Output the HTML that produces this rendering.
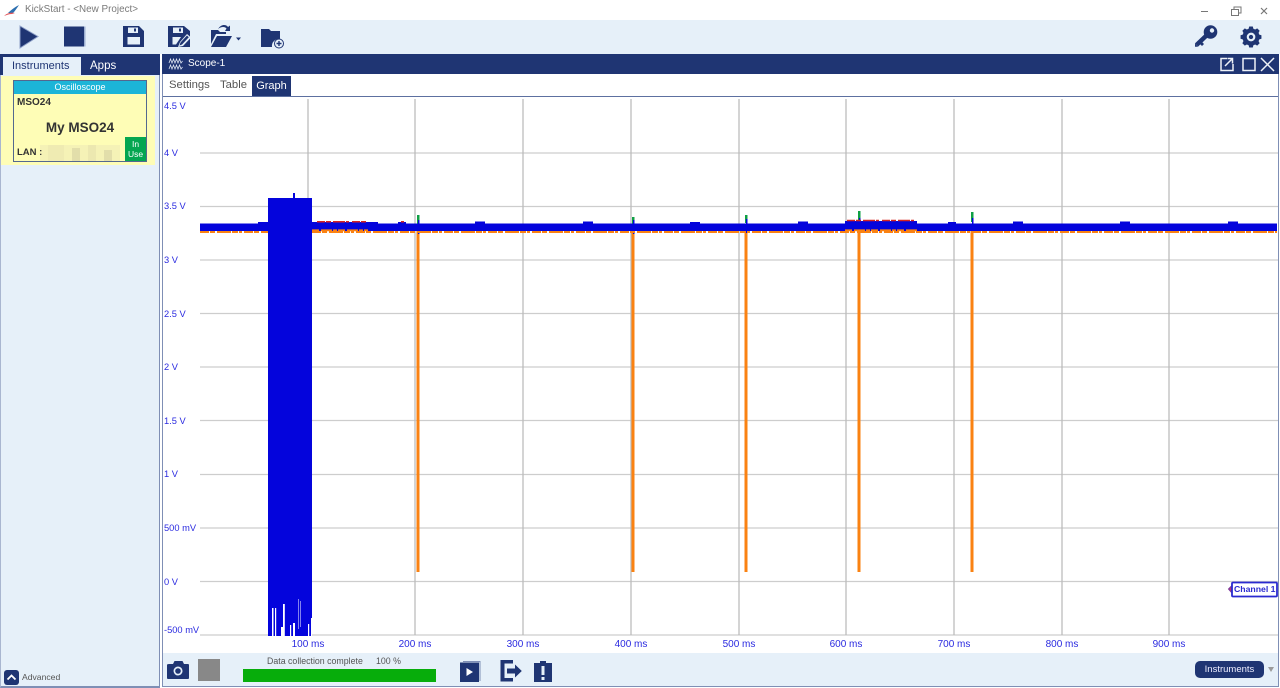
<!DOCTYPE html>
<html><head><meta charset="utf-8"><style>
html,body{margin:0;padding:0;background:#fff;width:1280px;height:688px;overflow:hidden}
body{font-family:"Liberation Sans",sans-serif;position:relative}
.a{position:absolute}
.t{position:absolute;white-space:nowrap;line-height:1}
.y{position:absolute;left:164px;color:#2a2ae0;font-size:9.3px;line-height:1;white-space:nowrap}
.x{position:absolute;top:640px;width:60px;text-align:center;color:#2a2ae0;font-size:10px;line-height:1}
</style></head><body>
<!-- title -->
<svg class="a" style="left:4px;top:3px" width="16" height="14" viewBox="0 0 16 14"><path d="M4 10 C7 7 11 4 15 2 C13 5 11 8 9 10Z" fill="#2c6fb0"/><path d="M0 13 C3 10 7 9 11 10 L8 11 C5 11 3 12 0 13Z" fill="#e0555a"/></svg>
<div class="t" style="left:25px;top:5px;font-size:9.900px;color:#7a7a7a">KickStart - &lt;New Project&gt;</div>
<svg class="a" style="left:1198px;top:2px" width="82" height="18"><path d="M3 9.500H10" stroke="#777" stroke-width="1"/><path d="M33.500 7.500h7v6h-7z M36 7V5h7v6h-2" fill="none" stroke="#777"/><path d="M63 6l6 6M69 6l-6 6" stroke="#777" stroke-width="1.200"/></svg>
<!-- toolbar -->
<div class="a" style="left:0;top:20px;width:1280px;height:34px;background:#e6f0f9"></div>
<svg class="a" style="left:0;top:20px" width="300" height="34" viewBox="0 0 300 34" fill="#1f3573">
<path d="M20 6L38 16.500L20 28Z" stroke="#8ea0c8" stroke-width="1"/>
<rect x="64" y="6.500" width="21" height="20"/><rect x="84" y="6.500" width="1.500" height="20" fill="#9db0d2"/>
<path fill-rule="evenodd" d="M123 6H139L144 11V27H123Z M128 7.500V13H138V7.500Z M127.500 17V24.500H140V17Z"/>
<rect x="134" y="8.500" width="2" height="3"/>
<path fill-rule="evenodd" d="M168 6H184L190 11V27H168Z M173 7.500V13H183V7.500Z M172.500 17V24.500H176L181 17Z"/><rect x="179" y="8.500" width="2" height="3"/>
<path d="M178 27L180 22L187 14L191 17.500L183 26Z" fill="#e6f0f9"/><path d="M179.500 25.500L180.500 22.500L187 15.500L188.800 17.200L182 24.500Z"/>
<path d="M211 14V10H218L220 12H226V14H216L211 24Z M211 27L217 16H232L226 27Z"/><path d="M218 9C221 4 226 4 228 7L230 5.500L230 11H225L226.500 8.500C225 6.500 221 6.500 218 9Z" fill="#1f3573"/>
<path d="M236 17.500h5l-2.500 3z"/>
<path d="M261 9H269L271 11H280V19A7 7 0 0 0 272 27H261Z"/><circle cx="279" cy="23.500" r="4.500" stroke="#1f3573" stroke-width="1" fill="#e6f0f9"/><path d="M276.500 23.500H281.500M279 21V26" stroke="#1f3573" stroke-width="1.400"/>
</svg>
<svg class="a" style="left:1190px;top:22px" width="80" height="28" viewBox="0 0 80 28" fill="#1f3573">
<circle cx="20.500" cy="10" r="6.800"/>
<path d="M17 13L6.500 23" stroke="#1f3573" stroke-width="4.500" fill="none"/>
<path d="M5 21.500L8 24.800H5V24.800Z"/><path d="M9 21L12 24L14 22L11 19Z"/>
<circle cx="22" cy="8.500" r="2.200" fill="#e6f0f9"/>
<g transform="translate(61,15) scale(.72) translate(-61,-17.500)">
<path fill-rule="evenodd" d="M58.500 3h5l.8 3 2.500 1 2.800-1.500 3.400 3.400-1.500 2.800 1 2.500 3 .8v5l-3 .8-1 2.500 1.500 2.800-3.400 3.400-2.800-1.500-2.500 1-.8 3h-5l-.8-3-2.500-1-2.800 1.500-3.400-3.400 1.500-2.800-1-2.500-3-.8v-5l3-.8 1-2.500-1.500-2.800 3.400-3.400 2.800 1.500 2.500-1Z M61 11.500a6 6 0 1 0 .1 12 6 6 0 0 0-.1-12Z"/><circle cx="61" cy="17.500" r="3"/>
</g>
</svg>
<!-- left panel -->
<div class="a" style="left:0;top:54px;width:160px;height:634px;background:#e6f0f9;box-sizing:border-box;border-right:1px solid #7f8fb5;border-left:1px solid #a9b6d0;border-bottom:2px solid #7f8fb5"></div>
<div class="a" style="left:0;top:54px;width:160px;height:21px;background:#1f3573"></div>
<div class="a" style="left:3px;top:57px;width:78px;height:19px;background:#e6f0f9"></div>
<div class="t" style="left:12px;top:61px;font-size:11px;color:#1f3573">Instruments</div>
<div class="t" style="left:90px;top:61px;font-size:11.500px;color:#fff">Apps</div>
<div class="a" style="left:1px;top:76px;width:154px;height:89px;background:#fefdb6"></div>
<div class="a" style="left:13px;top:80px;width:134px;height:82px;box-sizing:border-box;border:1px solid #54688f;background:#fefdb6"></div>
<div class="a" style="left:14px;top:81px;width:132px;height:13px;background:#1cb5d8;color:#fff;font-size:9px;line-height:13px;text-align:center">Oscilloscope</div>
<div class="t" style="left:17px;top:98px;font-size:10px;font-weight:bold;color:#333">MSO24</div>
<div class="t" style="left:14px;top:121px;width:132px;text-align:center;font-size:13.500px;font-weight:bold;color:#333">My MSO24</div>
<svg class="a" style="left:40px;top:145px" width="80" height="16"><rect width="80" height="16" fill="#f5f2b6"/><rect x="8" y="0" width="16" height="16" fill="#efebb2"/><rect x="32" y="3" width="8" height="13" fill="#e2deaa"/><rect x="48" y="0" width="8" height="16" fill="#ece8b0"/><rect x="64" y="5" width="8" height="11" fill="#e2deaa"/></svg>
<div class="t" style="left:17px;top:148px;font-size:9.500px;font-weight:bold;color:#333">LAN :</div>
<div class="a" style="left:125px;top:137px;width:21px;height:24px;background:#05a650;color:#fff;font-size:8.500px;line-height:10px;text-align:center;padding-top:2px;box-sizing:border-box">In<br>Use</div>
<div class="a" style="left:4px;top:670px;width:15px;height:15px;background:#1f3573;border-radius:3px"></div>
<svg class="a" style="left:4px;top:670px" width="15" height="15"><path d="M3.500 9.500L7.500 5.500L11.500 9.500" fill="none" stroke="#fff" stroke-width="1.800"/></svg>
<div class="t" style="left:22px;top:673px;font-size:8.600px;color:#555">Advanced</div>
<!-- right panel -->
<div class="a" style="left:162px;top:54px;width:1117px;height:633px;box-sizing:border-box;border:1px solid #7f8fb5;border-top:0;background:#fff"></div>
<div class="a" style="left:162px;top:54px;width:1117px;height:20px;background:#1f3573"></div>
<svg class="a" style="left:168px;top:57px" width="16" height="13" fill="none" stroke="#dfe6f2" stroke-width=".8"><path d="M1 6L2.500 2L4 6L5.500 2L7 6L8.500 2L10 6L11.500 2L13 6L14.500 4"/><path d="M1 12L2.500 8L4 12L5.500 8L7 12L8.500 8L10 12L11.500 8L13 12L14.500 10"/></svg>
<div class="t" style="left:188px;top:59px;font-size:10px;color:#fff">Scope-1</div>
<svg class="a" style="left:1218px;top:56px" width="60" height="17" fill="none" stroke="#eef2f8" stroke-width="1.500"><path d="M9 2.500H3V14.500H15V8"/><path d="M7 10L14 3M9.500 2.500H14.500V7.500"/><rect x="25" y="2.500" width="12" height="12"/><path d="M43 2L56 15M56 2L43 15"/></svg>
<div class="t" style="left:169px;top:80px;font-size:11.300px;color:#555">Settings</div>
<div class="t" style="left:220px;top:80px;font-size:11.300px;color:#555">Table</div>
<div class="a" style="left:252px;top:76px;width:39px;height:20px;background:#1f3573;color:#fff;font-size:11px;line-height:20px;text-align:center">Graph</div>
<div class="a" style="left:163px;top:96px;width:1115px;height:1px;background:#5d70a0"></div>
<!-- graph -->
<svg class="a" style="left:0;top:0" width="1280" height="688">
<g stroke="#cdcdcd" stroke-width="1.200" fill="none">
<path d="M200 153H1278M200 206.500H1278M200 260H1278M200 313.500H1278M200 367H1278M200 420.500H1278M200 474.500H1278M200 528H1278M200 581.500H1278M200 635H1278"/>
</g>
<g stroke="#bcbcbc" stroke-width="1.300" fill="none">
<path d="M308 99V635M415 99V635M523 99V635M631 99V635M739 99V635M846 99V635M954 99V635M1062 99V635M1169 99V635"/>
</g>
<!-- spikes -->
<g fill="#fa8212">
<rect x="416.500" y="230" width="3" height="342"/>
<rect x="631.500" y="230" width="3" height="342"/>
<rect x="744.500" y="230" width="3" height="342"/>
<rect x="857.500" y="230" width="3" height="342"/>
<rect x="970.500" y="230" width="3" height="342"/>
</g>
<g fill="#0f9f45">
<rect x="417" y="215" width="2.500" height="9"/>
<rect x="632" y="217" width="2.500" height="7"/>
<rect x="745" y="215" width="2.500" height="8"/>
<rect x="858" y="211" width="2.500" height="11"/>
<rect x="971" y="212" width="2.500" height="10"/>
</g>
<!-- blue band -->
<g fill="#0404dc">
<rect x="200" y="223.500" width="1077" height="7.500"/>
<rect x="258" y="222" width="12" height="8"/>
<rect x="312" y="222" width="66" height="8"/>
<rect x="398" y="222" width="8" height="3"/>
<rect x="475" y="221.500" width="10" height="4"/>
<rect x="583" y="221.500" width="10" height="4"/>
<rect x="690" y="222" width="10" height="4"/>
<rect x="798" y="221.500" width="10" height="4"/>
<rect x="845" y="221" width="72" height="8"/>
<rect x="905" y="221.500" width="10" height="4"/>
<rect x="948" y="222" width="8" height="4"/>
<rect x="1013" y="221.500" width="10" height="4"/>
<rect x="1120" y="221.500" width="10" height="4"/>
<rect x="1228" y="221.500" width="10" height="4"/>
<rect x="418" y="220" width="1.500" height="14"/>
<rect x="633" y="220" width="1.500" height="14"/>
<rect x="746" y="219" width="1.500" height="14"/>
<rect x="859" y="218" width="1.500" height="14"/>
<rect x="972" y="218" width="1.500" height="14"/>
<!-- burst -->
<rect x="268" y="198" width="44" height="438"/>
<rect x="293" y="193" width="2" height="6"/>
</g>
<!-- orange jagged edge, over the band's lower edge -->
<path d="M200 232H268M312 232H1277" stroke="#fa8212" stroke-width="2" stroke-dasharray="9 1 5 2 14 1 6 1 3 2" fill="none"/>
<path d="M312 230.300H368M845 230.300H917" stroke="#fa8212" stroke-width="1.800" stroke-dasharray="7 2 11 1 4 1" fill="none"/>
<!-- red -->
<path d="M317 221.700H366M847 220.500H915" stroke="#d8231f" stroke-width="1.500" stroke-dasharray="8 1 5 2 12 1 3 3" fill="none"/>
<rect x="401" y="221" width="3" height="1.500" fill="#d8231f"/>
<g fill="#fff">
<rect x="272" y="608" width="1.500" height="28"/><rect x="275" y="608" width="1.200" height="28"/>
<rect x="283" y="604" width="1.800" height="32"/><rect x="281" y="627" width="2" height="9"/>
<rect x="290" y="625" width="1.200" height="11"/><rect x="293" y="623" width="2" height="13"/>
<rect x="298" y="599" width="1" height="30" opacity=".5"/><rect x="300" y="601" width="1" height="26" opacity=".5"/>
<rect x="308" y="624" width="1.200" height="12"/>
<rect x="311" y="618" width="1" height="18"/>
</g>
<!-- channel marker -->
<path d="M1232 585.500L1228.500 589L1232 593" fill="#c03a6a" stroke="#7a3aa0"/>
<rect x="1232" y="582.500" width="45" height="14" rx="1" fill="#fff" stroke="#2a2ad0" stroke-width="1.800"/>
</svg>
<div class="t" style="left:1234px;top:585px;font-size:8.700px;font-weight:bold;color:#2a2ad0">Channel 1</div>
<div class="y" style="top:102px">4.5 V</div>
<div class="y" style="top:149px">4 V</div>
<div class="y" style="top:202px">3.5 V</div>
<div class="y" style="top:256px">3 V</div>
<div class="y" style="top:310px">2.5 V</div>
<div class="y" style="top:363px">2 V</div>
<div class="y" style="top:417px">1.5 V</div>
<div class="y" style="top:470px">1 V</div>
<div class="y" style="top:524px">500 mV</div>
<div class="y" style="top:578px">0 V</div>
<div class="y" style="top:626px">-500 mV</div>
<div class="x" style="left:278px">100 ms</div>
<div class="x" style="left:385px">200 ms</div>
<div class="x" style="left:493px">300 ms</div>
<div class="x" style="left:601px">400 ms</div>
<div class="x" style="left:709px">500 ms</div>
<div class="x" style="left:816px">600 ms</div>
<div class="x" style="left:924px">700 ms</div>
<div class="x" style="left:1032px">800 ms</div>
<div class="x" style="left:1139px">900 ms</div>
<!-- bottom bar -->
<div class="a" style="left:163px;top:653px;width:1115px;height:33px;background:#e6f0f9"></div>
<svg class="a" style="left:160px;top:653px" width="400" height="34" fill="#1f3573">
<path fill-rule="evenodd" d="M9 11H13L14.500 8H22.500L24 11H28Q29 11 29 12V25Q29 26 28 26H8Q7 26 7 25V12Q7 11 9 11Z M18 13.500a4.500 4.500 0 1 0 .1 9 4.500 4.500 0 0 0-.1-9Z"/><circle cx="18" cy="18" r="2.800"/>
<rect x="300" y="9.500" width="19" height="19.500"/><path d="M303 8.500H320V28" fill="none" stroke="#7f8fb5"/><path d="M306.500 15L313 19L306.500 23Z" fill="#fff"/>
<path d="M340.500 7H353V10.500H344.500V25H353V28.500H340.500Z"/><path d="M347 15.500H355V11.500L361.800 18L355 24.500V20.500H347Z"/>
<path fill-rule="evenodd" d="M374 10H380V8H386V10H392V29H374Z M381.500 13V22H384.500V13Z M381.500 24V27H384.500V24Z"/>
</svg>
<div class="a" style="left:198px;top:659px;width:22px;height:22px;background:#888"></div>
<div class="t" style="left:267px;top:657px;font-size:8.800px;color:#555">Data collection complete</div>
<div class="t" style="left:376px;top:657px;font-size:8.800px;color:#555">100 %</div>
<div class="a" style="left:243px;top:669px;width:193px;height:13px;background:#07ad0b"></div>
<div class="a" style="left:1195px;top:661px;width:69px;height:17px;background:#1f3573;border-radius:5px;color:#eef;font-size:9.500px;line-height:17px;text-align:center">Instruments</div>
<svg class="a" style="left:1267px;top:666px" width="8" height="7"><path d="M1 1H7L4 6Z" fill="#9a9a9a"/></svg>
</body></html>
